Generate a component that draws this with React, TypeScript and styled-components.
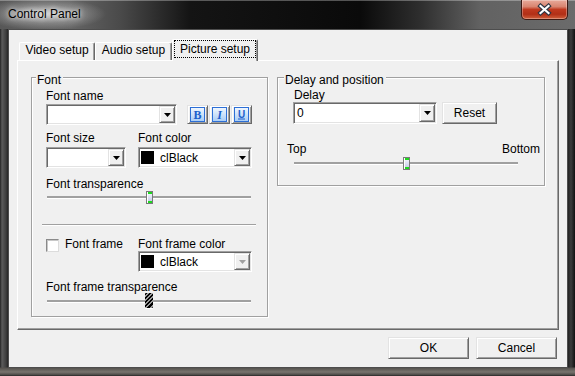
import React from "react";
import styled, { createGlobalStyle } from "styled-components";

const UI_FONT = `"Liberation Sans", Arial, sans-serif`;

const GlobalStyle = createGlobalStyle`
  html, body { margin: 0; padding: 0; background: #1b1b1b; }
  body { font-family: ${UI_FONT}; font-size: 12px; color: #000; }
  *, *::before, *::after { box-sizing: border-box; }
`;

const Window = styled.div`
  position: relative;
  width: 575px;
  height: 376px;
  display: flex;
  flex-direction: column;
  overflow: hidden;
  background:
    linear-gradient(180deg, rgba(0,0,0,0) 367px, #55524e 368px, #78746e 372px, #4a4845 375px, #222 376px),
    linear-gradient(90deg, #222 0, #5c5c5c 2px, #3e3e3e 6px, #262626 8px, #1c1c1c 50%, #1a1a1a 567px, #3c3c3c 571px, #111 575px);
`;

const TitleBar = styled.div`
  flex: none;
  height: 29px;
  display: flex;
  align-items: flex-start;
  padding-left: 8px;
  background:
    radial-gradient(ellipse 62px 16px at 44px 14px, rgba(225,225,225,0.85), rgba(190,190,190,0.35) 60%, rgba(190,190,190,0) 100%),
    linear-gradient(90deg, #575757 0, #656565 70px, #4a4a4a 120px, #141414 190px, #0a0a0a 360px, #2e2e2e 420px, #626262 480px, #6b6b6b 575px);
  box-shadow: inset 0 1px 0 rgba(255,255,255,0.3);
`;

const Title = styled.div`
  margin-top: 7px;
  line-height: 14px;
  font-size: 12px;
  color: #000;
  text-shadow: 0 0 5px rgba(255,255,255,0.9), 0 0 9px rgba(255,255,255,0.6);
  white-space: nowrap;
`;

const CloseButton = styled.div`
  margin-left: auto;
  margin-right: 7px;
  width: 47px;
  height: 20px;
  display: flex;
  align-items: center;
  justify-content: center;
  border: 1px solid #3d1a14;
  border-top: none;
  border-radius: 0 0 5px 5px;
  background: linear-gradient(180deg, #e8a99a 0, #d98570 35%, #c0391f 50%, #b22f17 75%, #d0603c 100%);
  box-shadow: inset 0 0 0 1px rgba(255,255,255,0.3);
`;

const Client = styled.div`
  flex: 1;
  margin: 0 7px 8px 8px;
  background: #f0f0f0;
  border: 1px solid #4d4d4d;
  display: flex;
  flex-direction: column;
  padding: 9px 8px 0 8px;
`;

const TabStrip = styled.div`
  position: relative;
  z-index: 2;
  display: flex;
  align-items: flex-end;
  height: 21px;
  padding-left: 2px;
`;

const Tab = styled.div<{ $active?: boolean; $w: number }>`
  width: ${(p) => p.$w}px;
  height: ${(p) => (p.$active ? 22 : 18)}px;
  margin-bottom: ${(p) => (p.$active ? -1 : 0)}px;
  display: flex;
  justify-content: center;
  align-items: flex-start;
  background: #f0f0f0;
  border-top: 1px solid #fff;
  border-left: 1px solid #fff;
  border-right: 1px solid #696969;
  box-shadow: inset -1px 0 0 #a0a0a0;
  border-radius: 2px 2px 0 0;
  line-height: 14px;
  white-space: nowrap;
`;

const FocusRect = styled.div`
  width: 82px;
  height: 18px;
  padding-top: 1px;
  text-align: center;
  border: 1px dotted #000;
`;

const TabPanel = styled.div`
  height: 270px;
  display: flex;
  align-items: flex-start;
  gap: 9px;
  padding: 16px 0 0 13px;
  background: #f0f0f0;
  border-top: 1px solid #fff;
  border-left: 1px solid #fff;
  border-right: 1px solid #696969;
  border-bottom: 1px solid #696969;
  box-shadow: inset -1px -1px 0 #a0a0a0;
`;

const GroupBox = styled.div<{ $w: number; $h: number }>`
  flex: none;
  width: ${(p) => p.$w}px;
  height: ${(p) => p.$h}px;
  border: 1px solid #a0a0a0;
  box-shadow: inset 1px 1px 0 #fff, 1px 1px 0 #fff;
  display: flex;
  flex-direction: column;
`;

const Legend = styled.div<{ $inset: number }>`
  align-self: flex-start;
  margin: -5px 0 0 ${(p) => p.$inset}px;
  padding: 0 2px 0 1px;
  background: #f0f0f0;
  line-height: 14px;
  white-space: nowrap;
`;

const GroupBody = styled.div<{ $pl: number }>`
  display: flex;
  flex-direction: column;
  align-items: flex-start;
  padding: 0 14px 0 ${(p) => p.$pl}px;
`;

const Caption = styled.div<{ $mt?: number; $ml?: number }>`
  margin-top: ${(p) => p.$mt ?? 0}px;
  margin-left: ${(p) => p.$ml ?? 0}px;
  line-height: 14px;
  white-space: nowrap;
`;

const FontNameRow = styled.div`
  display: flex;
  align-items: center;
  margin-top: 1px;
`;

const StyleButtons = styled.div`
  display: flex;
  gap: 1px;
  margin-left: 10px;
`;

const Raised = `
  background: #f0f0f0;
  border-top: 1px solid #e3e3e3;
  border-left: 1px solid #e3e3e3;
  border-right: 1px solid #696969;
  border-bottom: 1px solid #696969;
  box-shadow: inset 1px 1px 0 #fff, inset -1px -1px 0 #a0a0a0;
`;

const ToolButton = styled.div`
  ${Raised}
  width: 21px;
  height: 19px;
  display: flex;
  align-items: center;
  justify-content: center;
`;

const PushButton = styled.div<{ $w: number; $h: number }>`
  ${Raised}
  width: ${(p) => p.$w}px;
  height: ${(p) => p.$h}px;
  display: flex;
  align-items: center;
  justify-content: center;
  line-height: 14px;
  flex: none;
`;

const FieldGrid = styled.div<{ $mt: number }>`
  display: grid;
  grid-template-columns: 80px 114px;
  column-gap: 12px;
  margin-top: ${(p) => p.$mt}px;
  align-items: start;
`;

const Field = styled.div`
  display: flex;
  flex-direction: column;
  align-items: flex-start;
`;

const ComboFrame = styled.div<{ $w: number; $h: number; $mt: number }>`
  width: ${(p) => p.$w}px;
  height: ${(p) => p.$h}px;
  margin-top: ${(p) => p.$mt}px;
  flex: none;
  display: flex;
  align-items: stretch;
  background: #fff;
  border-top: 1px solid #a0a0a0;
  border-left: 1px solid #a0a0a0;
  border-right: 1px solid #fff;
  border-bottom: 1px solid #fff;
  box-shadow: inset 1px 1px 0 #696969, inset -1px -1px 0 #e3e3e3;
  padding: 1px;
`;

const ComboValue = styled.div`
  flex: 1;
  min-width: 0;
  display: flex;
  align-items: center;
  gap: 6px;
  padding-left: 2px;
  line-height: 14px;
  white-space: nowrap;
`;

const ComboButton = styled.div`
  ${Raised}
  width: 16px;
  flex: none;
  display: flex;
  align-items: center;
  justify-content: center;
`;

const Swatch = styled.div`
  width: 13px;
  height: 13px;
  margin-left: -1px;
  background: #000;
  flex: none;
`;

const Separator = styled.div`
  align-self: stretch;
  height: 2px;
  margin: 20px -3px 0 -4px;
  border-top: 1px solid #a0a0a0;
  border-bottom: 1px solid #fff;
`;

const CheckRow = styled.div`
  display: flex;
  align-items: flex-start;
  gap: 6px;
  line-height: 14px;
  white-space: nowrap;
`;

const CheckBox = styled.div`
  width: 13px;
  height: 13px;
  margin-top: 2px;
  flex: none;
  background: #fff;
  border-top: 1px solid #8a8a8a;
  border-left: 1px solid #8a8a8a;
  border-right: 1px solid #dcdcdc;
  border-bottom: 1px solid #dcdcdc;
  box-shadow: inset 1px 1px 0 #c8c8c8;
`;

const SliderBox = styled.div<{ $w: number; $mt: number }>`
  position: relative;
  width: ${(p) => p.$w}px;
  height: 13px;
  margin-top: ${(p) => p.$mt}px;
  margin-left: 1px;
  flex: none;
`;

const SliderTrack = styled.div`
  position: absolute;
  left: 0;
  right: 0;
  top: 5px;
  height: 2px;
  background: #a0a0a0;
  box-shadow: 0 1px 0 #fff;
`;

const Thumb = styled.div`
  position: absolute;
  top: 0;
  width: 7px;
  height: 13px;
  border: 1px solid #7a7a7a;
  background: linear-gradient(180deg, #1ed81e 0, #1ed81e 2px, #eef0fb 2px, #c9cce8 9px, #1ed81e 9px, #1ed81e 11px);
  box-shadow: inset 1px 0 0 #fff;
`;

const DisabledThumb = styled.div`
  position: absolute;
  top: -2px;
  width: 8px;
  height: 15px;
  background:
    repeating-linear-gradient(135deg, #000 0 1.5px, #9a9a9a 1.5px 3px);
  border-radius: 1px;
  box-shadow: 0 1px 0 #fff;
`;

const DelayRow = styled.div`
  display: flex;
  gap: 5px;
`;

const RangeLabels = styled.div`
  display: flex;
  justify-content: space-between;
  width: 253px;
  margin: 18px 0 0 -6px;
  line-height: 14px;
`;

const ButtonRow = styled.div`
  display: flex;
  justify-content: flex-end;
  gap: 7px;
  margin-top: 7px;
  padding-right: 2px;
`;

function Arrow({ disabled }: { disabled?: boolean }) {
  return (
    <svg width="7" height="4" viewBox="0 0 7 4" style={{ display: "block" }}>
      <polygon points="0,0 7,0 3.5,4" fill={disabled ? "#a0a0a0" : "#000"} />
    </svg>
  );
}

function ComboBox({
  width,
  height = 21,
  mt = 0,
  disabled,
  children,
}: {
  width: number;
  height?: number;
  mt?: number;
  disabled?: boolean;
  children?: React.ReactNode;
}) {
  return (
    <ComboFrame $w={width} $h={height} $mt={mt}>
      <ComboValue>{children}</ComboValue>
      <ComboButton>
        <Arrow disabled={disabled} />
      </ComboButton>
    </ComboFrame>
  );
}

function Slider({
  width,
  value,
  mt = 0,
  disabled,
}: {
  width: number;
  value: number;
  mt?: number;
  disabled?: boolean;
}) {
  const tw = disabled ? 8 : 7;
  const left = Math.round(value * (width - tw));
  return (
    <SliderBox $w={width} $mt={mt}>
      <SliderTrack />
      {disabled ? <DisabledThumb style={{ left }} /> : <Thumb style={{ left }} />}
    </SliderBox>
  );
}

function StyleIcon({ kind }: { kind: "B" | "I" | "U" }) {
  const id = `grad-${kind}`;
  return (
    <svg width="15" height="15" viewBox="0 0 15 15" style={{ display: "block" }}>
      <defs>
        <linearGradient id={id} x1="0" y1="0" x2="0" y2="1">
          <stop offset="0" stopColor="#f2f8ff" />
          <stop offset="1" stopColor="#a8ccf4" />
        </linearGradient>
      </defs>
      <rect x="0.5" y="0.5" width="14" height="14" fill={`url(#${id})`} stroke="#2d6fd6" />
      <text
        x="7.5"
        y={kind === "U" ? 10.5 : 11.5}
        textAnchor="middle"
        fontFamily={kind === "U" ? '"Liberation Sans", Arial, sans-serif' : '"Liberation Serif", serif'}
        fontWeight="bold"
        fontStyle={kind === "I" ? "italic" : "normal"}
        fontSize={kind === "U" ? 10 : 12}
        fill="#1d5fcc"
      >
        {kind}
      </text>
      {kind === "U" && <rect x="4" y="11.5" width="7" height="1" fill="#1d5fcc" />}
    </svg>
  );
}

function CloseGlyph() {
  return (
    <svg width="15" height="13" viewBox="0 0 15 13" style={{ display: "block" }}>
      <path d="M3.5 3 L11.5 10 M11.5 3 L3.5 10" stroke="#2f3542" strokeWidth="4.4" strokeLinecap="square" />
      <path d="M3.5 3 L11.5 10 M11.5 3 L3.5 10" stroke="#fff" strokeWidth="2.2" strokeLinecap="square" />
    </svg>
  );
}

export default function App() {
  return (
    <>
      <GlobalStyle />
      <Window>
        <TitleBar>
          <Title>Control Panel</Title>
          <CloseButton aria-label="Close">
            <CloseGlyph />
          </CloseButton>
        </TitleBar>
        <Client>
          <TabStrip>
            <Tab $w={76}>Video setup</Tab>
            <Tab $w={77}>Audio setup</Tab>
            <Tab $w={86} $active>
              <FocusRect>Picture setup</FocusRect>
            </Tab>
          </TabStrip>
          <TabPanel>
            <GroupBox $w={237} $h={240}>
              <Legend $inset={4}>Font</Legend>
              <GroupBody $pl={14}>
                <Caption $mt={2}>Font name</Caption>
                <FontNameRow>
                  <ComboBox width={131} />
                  <StyleButtons>
                    <ToolButton>
                      <StyleIcon kind="B" />
                    </ToolButton>
                    <ToolButton>
                      <StyleIcon kind="I" />
                    </ToolButton>
                    <ToolButton>
                      <StyleIcon kind="U" />
                    </ToolButton>
                  </StyleButtons>
                </FontNameRow>
                <FieldGrid $mt={6}>
                  <Field>
                    <Caption>Font size</Caption>
                    <ComboBox width={80} mt={2} />
                  </Field>
                  <Field>
                    <Caption>Font color</Caption>
                    <ComboBox width={114} mt={2}>
                      <Swatch />
                      clBlack
                    </ComboBox>
                  </Field>
                </FieldGrid>
                <Caption $mt={9}>Font transparence</Caption>
                <Slider width={204} value={0.5} />
                <Separator />
                <FieldGrid $mt={11}>
                  <CheckRow>
                    <CheckBox />
                    <span>Font frame</span>
                  </CheckRow>
                  <Field>
                    <Caption>Font frame color</Caption>
                    <ComboBox width={114} disabled>
                      <Swatch />
                      clBlack
                    </ComboBox>
                  </Field>
                </FieldGrid>
                <Caption $mt={8}>Font frame transparence</Caption>
                <Slider width={204} value={0.5} mt={1} disabled />
              </GroupBody>
            </GroupBox>
            <GroupBox $w={268} $h={109}>
              <Legend $inset={6}>Delay and position</Legend>
              <GroupBody $pl={15}>
                <Caption $mt={1} $ml={1}>Delay</Caption>
                <DelayRow>
                  <ComboBox width={144} height={22}>
                    0
                  </ComboBox>
                  <PushButton $w={55} $h={22}>Reset</PushButton>
                </DelayRow>
                <RangeLabels>
                  <span>Top</span>
                  <span>Bottom</span>
                </RangeLabels>
                <Slider width={224} value={0.5} mt={1} />
              </GroupBody>
            </GroupBox>
          </TabPanel>
          <ButtonRow>
            <PushButton $w={81} $h={22}>OK</PushButton>
            <PushButton $w={81} $h={22}>Cancel</PushButton>
          </ButtonRow>
        </Client>
      </Window>
    </>
  );
}
